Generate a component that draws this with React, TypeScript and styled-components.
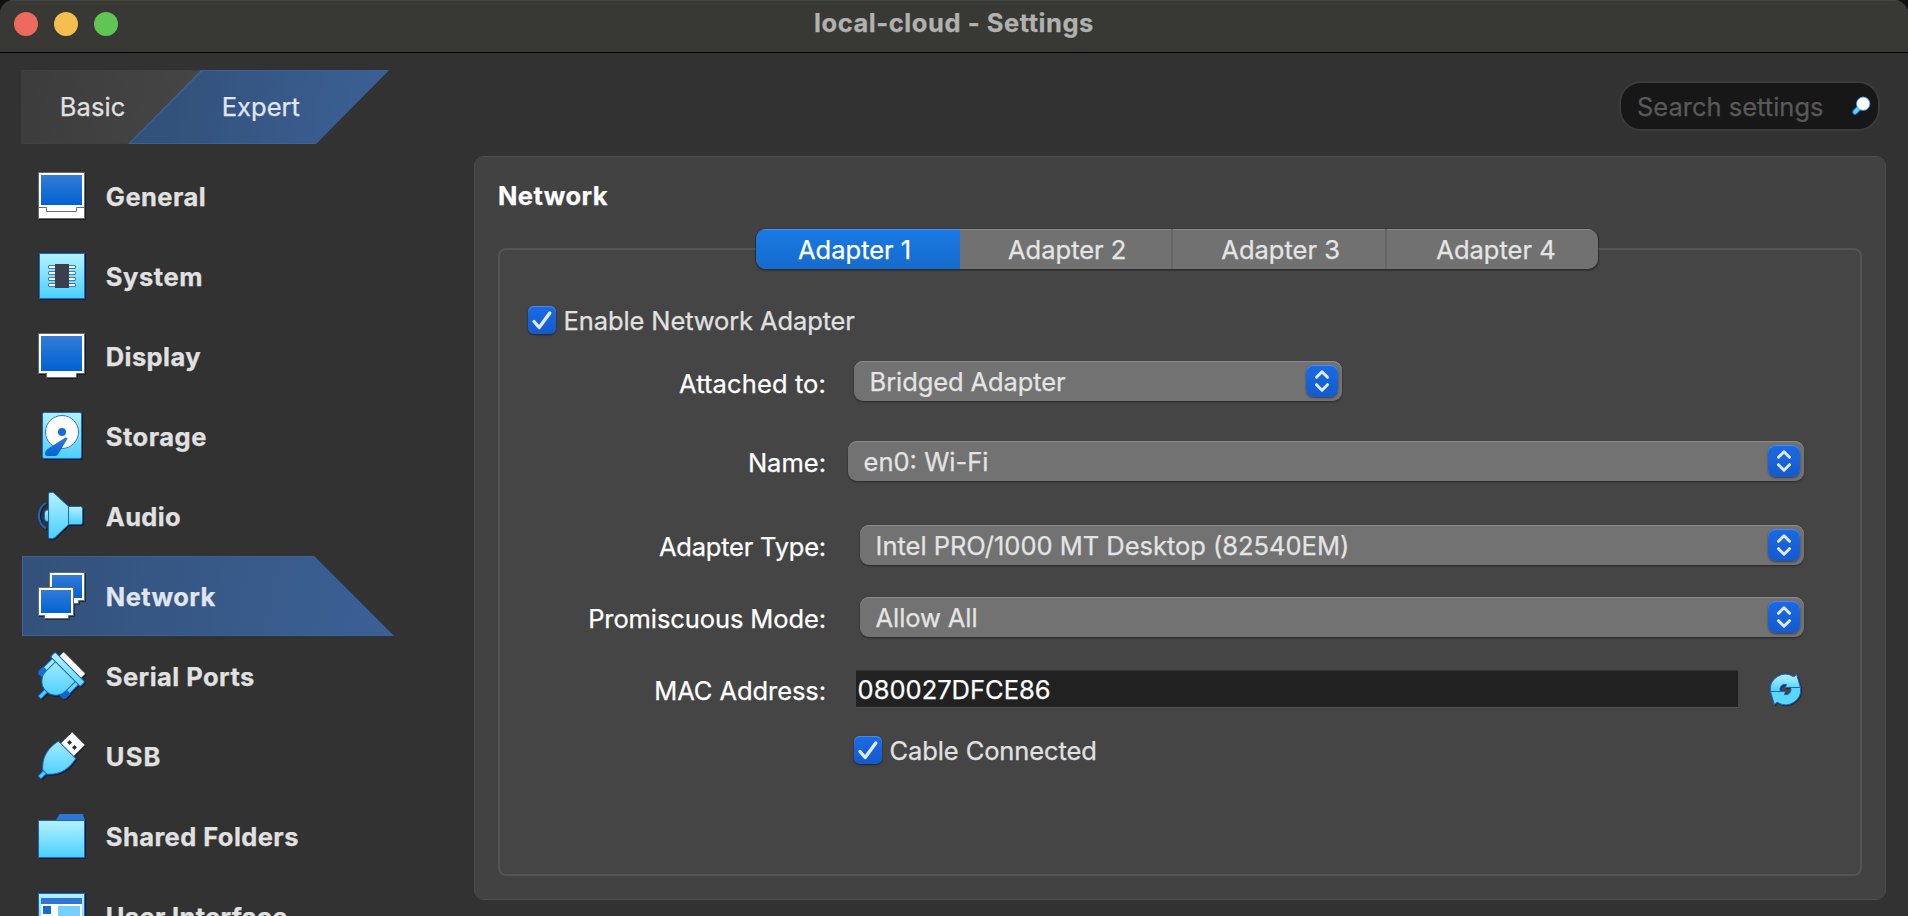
import React, { useState } from "react";
import styled, { createGlobalStyle, css } from "styled-components";

const GlobalStyle = createGlobalStyle`
  * { box-sizing: border-box; }
  html, body { margin: 0; height: 100%; background: #111; overflow: hidden; }
  button, input { font: inherit; letter-spacing: inherit; border: 0; padding: 0; margin: 0; }
`;

const Window = styled.div`
  display: flex;
  flex-direction: column;
  width: 1908px;
  height: 916px;
  overflow: hidden;
  border-radius: 14px 14px 0 0;
  background: #323232;
  color: #e1e1e1;
  font: 400 25.5px/30px Inter, "Liberation Sans", sans-serif;
  -webkit-text-stroke: 0.25px currentColor;
  white-space: nowrap;
  user-select: none;
`;

/* ---------- title bar ---------- */

const TitleBar = styled.header`
  display: grid;
  grid-template-columns: 1fr auto 1fr;
  flex: none;
  height: 53px;
  padding: 0 14px;
  background: #383835;
  border-bottom: 1px solid #000;
  box-shadow: inset 0 1px 0 #454543;
`;

const Lights = styled.div`
  display: flex;
  gap: 16px;
  padding-top: 12px;
`;

const Light = styled.span<{ $color: string }>`
  width: 24px;
  height: 24px;
  border-radius: 50%;
  background: ${(p) => p.$color};
`;

const WindowTitle = styled.h1`
  margin: 8px 0 0;
  font-size: inherit;
  font-weight: 700;
  line-height: 30px;
  letter-spacing: 0.55px;
  color: #b1b1af;
`;

/* ---------- mode switch and search ---------- */

const TopRow = styled.div`
  display: flex;
  flex: none;
  justify-content: space-between;
  align-items: flex-start;
  height: 103px;
  padding: 17px 28px 0 21px;
`;

const ModeSwitch = styled.div`
  display: flex;
  height: 74px;
`;

const BasicMode = styled.button`
  width: 180px;
  padding: 0 0 1px 38.8px;
  text-align: left;
  letter-spacing: 0.1px;
  color: #e0e0e0;
  background: linear-gradient(100deg, #3c3c3c, #464646);
  box-shadow: inset 0 1px 0 #404040, inset 0 -1px 0 #404040;
`;

const ExpertMode = styled.button`
  position: relative;
  width: 261px;
  margin-left: -73px;
  padding: 0 0 1px 93.8px;
  text-align: left;
  color: #e0e6ef;
  background: #3b6296;
  clip-path: polygon(73px 0, 100% 0, 188px 100%, 0 100%);

  &::before {
    content: "";
    position: absolute;
    inset: 1px 0;
    background: linear-gradient(100deg, #33527b 20%, #3b5f93 90%);
    clip-path: polygon(74.5px 0, 100% 0, 188px 100%, 2.5px 100%);
  }
  span { position: relative; }
`;

const SearchBox = styled.label`
  display: flex;
  align-items: center;
  width: 261px;
  height: 50px;
  margin-top: 11px;
  padding: 2px 7px 0 16px;
  border: 2px solid #3c3c3c;
  border-radius: 22px;
  background: #171717;
  svg { margin-bottom: 2px; }
`;

const SearchInput = styled.input`
  width: 215px;
  height: 30px;
  outline: none;
  background: none;
  color: #e0e0e0;
  &::placeholder { color: #595959; opacity: 1; }
`;

/* ---------- category list ---------- */

const Main = styled.div`
  display: flex;
  flex: none;
  height: 760px;
  overflow: hidden;
`;

const Sidebar = styled.nav`
  width: 474px;
  flex: none;
  padding-left: 22px;
`;

const Category = styled.button<{ $active: boolean; $track: number }>`
  position: relative;
  display: flex;
  align-items: flex-start;
  gap: 19.8px;
  width: 372px;
  height: 80px;
  padding: 16px 0 0 16px;
  background: none;
  color: #e1e1e1;
  font-weight: 700;
  letter-spacing: ${(p) => p.$track}px;
  text-align: left;

  span { position: relative; margin-top: 10px; }
  svg { position: relative; flex: none; filter: drop-shadow(1px 1px 0.5px rgba(0, 0, 0, 0.45)); }

  ${(p) =>
    p.$active &&
    css`
      color: #e0e6ef;
      background: #3b6296;
      clip-path: polygon(0 0, 292px 0, 100% 100%, 0 100%);
      &::before {
        content: "";
        position: absolute;
        inset: 1px 0 1px 1px;
        background: linear-gradient(100deg, #33527b 5%, #3b5f93 90%);
      }
    `}
`;

/* ---------- settings page ---------- */

const Page = styled.section`
  width: 1412px;
  height: 744px;
  padding: 24px 23px 0;
  border: 1px solid #4a4a4a;
  border-radius: 10px;
  background: #424242;
`;

const PageTitle = styled.h2`
  margin: 0;
  height: 48px;
  font-size: inherit;
  font-weight: 700;
  line-height: 30px;
  letter-spacing: 0.42px;
  color: #fff;
`;

const Tabs = styled.div`
  position: relative;
  z-index: 1;
  display: flex;
  width: 842px;
  height: 40px;
  margin: 0 0 -21px 258px;
  border-radius: 10px;
  overflow: hidden;
  background: #717171;
  box-shadow: 0 0 0 1px rgba(0, 0, 0, 0.12), 0 1px 1px 1px rgba(0, 0, 0, 0.25);
`;

const Tab = styled.button<{ $active: boolean; $width: number; $line: boolean; $shift: number }>`
  width: ${(p) => p.$width}px;
  padding: 1px 0 0 ${(p) => p.$shift}px;
  text-align: left;
  color: ${(p) => (p.$active ? "#fff" : "#e5e5e5")};
  background: ${(p) => (p.$active ? "linear-gradient(#1a7ae6, #156bcb)" : "transparent")};
  box-shadow: inset 0 1px 0 ${(p) => (p.$active ? "#4c95ea" : "#8a8a8a")};
  ${(p) => p.$line && "border-right: 2px solid #656565;"}
`;

const Group = styled.div`
  display: flex;
  flex-direction: column;
  height: 628px;
  padding-top: 56px;
  border: 2px solid #545454;
  border-radius: 8px;
  background: #454545;
`;

const CheckLabel = styled.label<{ $left: number; $top: number }>`
  display: flex;
  align-items: center;
  gap: 7.6px;
  height: 28px;
  margin: ${(p) => p.$top}px 0 0 ${(p) => p.$left}px;
`;

const CheckButton = styled.button`
  display: flex;
  width: 28px;
  height: 28px;
  border-radius: 6px;
  background: linear-gradient(#1b6be6, #155acb);
  box-shadow: inset 0 1px 0 #4a8bee, 0 1px 2px rgba(0, 0, 0, 0.5);
`;

const CheckText = styled.span<{ $track: number }>`
  padding-top: 1px;
  letter-spacing: ${(p) => p.$track}px;
`;

const FieldRow = styled.div<{ $top: number }>`
  display: flex;
  height: 40px;
  margin-top: ${(p) => p.$top}px;
`;

const FieldLabel = styled.label<{ $drop: number; $track: number }>`
  width: 326px;
  margin-right: 1px;
  padding-top: ${(p) => p.$drop}px;
  line-height: 40px;
  text-align: right;
  letter-spacing: ${(p) => p.$track}px;
  color: #fff;
`;

const Select = styled.button<{ $gap: number; $width: number; $track: number }>`
  display: flex;
  align-items: flex-start;
  justify-content: space-between;
  width: ${(p) => p.$width}px;
  height: 40px;
  margin-left: ${(p) => p.$gap}px;
  padding: 4px 4px 0 15.6px;
  border-radius: 9px;
  background: #727272;
  box-shadow: inset 0 1px 0 #8c8c8c, 0 1px 2px rgba(0, 0, 0, 0.4);
  color: #e4e4e4;
  letter-spacing: ${(p) => p.$track}px;
  span { padding-top: 2px; }
`;

const Stepper = styled.i`
  display: flex;
  width: 32px;
  height: 32px;
  border-radius: 8px;
  background: linear-gradient(#1a6ae5, #155acc);
  box-shadow: inset 0 1px 0 #4a8bee, 0 1px 2px rgba(0, 0, 0, 0.45);
`;

const MacInput = styled.input`
  width: 882px;
  height: 38px;
  margin: -1px 31px 0 29px;
  padding: 1px 0 0 1.6px;
  border-top: 1px solid #333;
  border-bottom: 1px solid #555;
  outline: none;
  background: #212121;
  color: #fff;
`;

const IconButton = styled.button`
  display: flex;
  width: 34px;
  height: 34px;
  margin-top: 2px;
  background: none;
  svg { filter: drop-shadow(1px 1px 0.5px rgba(0, 0, 0, 0.4)); }
`;

/* ---------- icons ---------- */

const EDGE = "#1767cf";

const Gradients = () => (
  <svg width="0" height="0" display="block" aria-hidden>
    <defs>
      <linearGradient id="sky" x1="0" y1="0" x2="0" y2="1">
        <stop offset="0" stopColor="#b4f2ff" />
        <stop offset="1" stopColor="#4acfff" />
      </linearGradient>
      <linearGradient id="plug" gradientUnits="userSpaceOnUse" x1="-15" y1="-15" x2="15" y2="15">
        <stop offset="0" stopColor="#b4f2ff" />
        <stop offset="1" stopColor="#4acfff" />
      </linearGradient>
      <linearGradient id="blue" x1="0" y1="0" x2="0" y2="1">
        <stop offset="0" stopColor="#347bd6" />
        <stop offset="1" stopColor="#0063d3" />
      </linearGradient>
    </defs>
  </svg>
);

const Icon = ({ children }: { children: React.ReactNode }) => (
  <svg width="48" height="48" viewBox="0 0 48 48">
    {children}
  </svg>
);

const GeneralIcon = () => (
  <Icon>
    <rect x="0.5" y="0.5" width="46" height="46" fill="#fff" stroke="#6b6b6b" />
    <rect x="3" y="3" width="41" height="30" fill="url(#blue)" />
    <path d="M0.5 35.5H8.5V39.5H38.5V35.5H46.5" fill="none" stroke="#6b6b6b" />
  </Icon>
);

const SystemIcon = () => (
  <Icon>
    <rect x="1.5" y="1.5" width="45" height="45" fill="url(#sky)" stroke={EDGE} />
    {[12, 18, 24, 30].map((y) => (
      <rect key={y} x="10.5" y={y + 1.5} width="27" height="3" rx="0.5" fill="#fff" stroke="#3d7fae" />
    ))}
    <rect x="17" y="12" width="14" height="24" fill="#3a3f4b" />
  </Icon>
);

const DisplayIcon = () => (
  <Icon>
    <path d="M0.5 1.5H46.5V41.5H38.5V45.5H8.5V41.5H0.5Z" fill="#fff" stroke="#6b6b6b" />
    <rect x="3" y="4" width="41" height="35" fill="url(#blue)" />
  </Icon>
);

const StorageIcon = () => (
  <Icon>
    <rect x="4.5" y="0.5" width="39" height="46" rx="1.8" fill="url(#sky)" stroke={EDGE} />
    <circle cx="24" cy="20" r="16.5" fill="#fff" stroke="#3478cc" />
    <circle cx="24" cy="20" r="4" fill="#176bd4" />
    <path d="M29.6 25.7Q28 25.3 25.5 26.8L11 36Q7 38.5 7 41.5Q7 44 9.5 44H17Q19 44 20.5 41.5L27.5 30Q29.5 27.5 29.6 25.7Z" fill="url(#blue)" />
  </Icon>
);

const AudioIcon = () => (
  <Icon>
    <path d="M8 11A15 15 0 0 0 8 36.5" fill="none" stroke={EDGE} strokeWidth="2" />
    <path d="M10.5 18H9Q6.5 18.5 6.5 21V26.5Q6.5 29 9 29.5H10.5Z" fill="url(#sky)" stroke={EDGE} />
    <path d="M30.5 14.5H42.5Q44.5 14.5 44.5 16.5V30.5Q44.5 32.5 42.5 32.5H30.5Z" fill="url(#sky)" stroke={EDGE} />
    <path d="M10.5 2Q10.5 0.5 12 0.5H14.5Q15.5 0.5 16.5 1.5L30.5 14.5V32.5L17 45.5Q16 46.5 14.5 46.5H12Q10.5 46.5 10.5 45Z" fill="url(#sky)" stroke={EDGE} />
  </Icon>
);

const NetworkIcon = () => (
  <Icon>
    <path d="M11.5 0.5H46.5V28.5H40.5V31.5H17V28.5H11.5Z" fill="#fff" stroke="#6b6b6b" />
    <rect x="14" y="3" width="30" height="23" fill="url(#blue)" />
    <path d="M0.5 15.5H35.5V43.5H30.5V46.5H6.5V43.5H0.5Z" fill="#fff" stroke="#6b6b6b" />
    <rect x="3" y="18" width="30" height="23" fill="url(#blue)" />
  </Icon>
);

const SerialIcon = () => (
  <Icon>
    <g transform="translate(23.5 23.5) rotate(45)" stroke={EDGE}>
      <rect x="-15" y="-18" width="30.5" height="6" rx="1" fill="#fff" stroke="#bbb" strokeWidth="0.5" />
      <rect x="-18.5" y="-6" width="6.5" height="15" fill="url(#plug)" />
      <rect x="12" y="-6" width="6.5" height="15" fill="url(#plug)" />
      <path d="M-19 7H-12V13L-13.5 15H-17.5L-19 13Z" fill="#1b6dd2" />
      <path d="M19 7H12V13L13.5 15H17.5L19 13Z" fill="#0b63d2" />
      <path d="M-2 19V31H2V19Z" fill="#4acfff" />
      <path d="M-14 -6H14V8A14 14 0 0 1 -14 8Z" fill="url(#plug)" />
      <rect x="-21" y="-12" width="42" height="6.5" rx="1.5" fill="url(#plug)" />
    </g>
  </Icon>
);

const UsbIcon = () => (
  <Icon>
    <g transform="translate(23.5 23.5) rotate(45)">
      <rect x="-9" y="-24" width="18" height="17" fill="#fff" />
      <rect x="-5.2" y="-16.6" width="3.5" height="3.5" fill="#323232" />
      <rect x="1.8" y="-16.6" width="3.5" height="3.5" fill="#323232" />
      <path d="M-2 22V31H2V22Z" fill="#4acfff" stroke={EDGE} />
      <path d="M-12.3 -8C-15 4 -13 15 -3 23.5H3C13 15 15 4 12.3 -8Z" fill="url(#plug)" stroke={EDGE} />
    </g>
  </Icon>
);

const FolderIcon = () => (
  <Icon>
    <path d="M17.5 9L21.5 2H45L47 8V9Z" fill="#2f75d3" />
    <rect x="0.5" y="8.5" width="46" height="37" fill="url(#sky)" stroke={EDGE} />
  </Icon>
);

const InterfaceIcon = () => (
  <Icon>
    <rect x="0.5" y="1.5" width="46" height="45" fill="url(#sky)" stroke={EDGE} />
    <rect x="3" y="6" width="41" height="6" fill="#2f75d3" />
    <rect x="3" y="12" width="41" height="32" fill="#fff" />
    <rect x="5" y="14" width="8" height="8" fill="#176bd4" />
    <rect x="20" y="14" width="22" height="16" fill="#76d0ff" />
    <rect x="5" y="25" width="8" height="8" fill="#176bd4" />
  </Icon>
);

const SearchIcon = () => (
  <svg width="20" height="20" viewBox="0 0 20 20">
    <path d="M7.5 12L3.2 16.3" stroke="#1b74d8" strokeWidth="5.8" strokeLinecap="round" />
    <path d="M7.8 11.7L3.3 16.2" stroke="#5ed2ff" strokeWidth="4" strokeLinecap="round" />
    <circle cx="11.8" cy="7.6" r="7" fill="#fff" stroke="#42a5f5" strokeWidth="1" />
  </svg>
);

const RefreshIcon = () => {
  const half = "M1.5 18.5A15 15 0 0 1 24.3 3.6L25.5 3.4L27.5 1.2L31.5 14.5H16.5L17.5 11.5A5 5 0 0 0 11.5 18.5Z";
  return (
    <svg width="34" height="34" viewBox="0 0 34 34">
      <path d={half} transform="rotate(180 16.5 16.5)" fill="#5bd6ff" stroke={EDGE} strokeLinejoin="round" />
      <path d={half} fill="url(#sky)" stroke={EDGE} strokeLinejoin="round" />
    </svg>
  );
};

const CheckMark = () => (
  <svg width="28" height="28" viewBox="0 0 28 28">
    <path d="M6 15.5L11.2 21.5L21.8 7" fill="none" stroke="#dfe9fb" strokeWidth="3.4" strokeLinecap="round" strokeLinejoin="round" />
  </svg>
);

const Chevrons = () => (
  <svg width="32" height="32" viewBox="0 0 32 32">
    <path d="M10.5 12.3L16 6.8L21.5 12.3M10.5 19.7L16 25.2L21.5 19.7" fill="none" stroke="#dfe9fb" strokeWidth="3" strokeLinecap="round" strokeLinejoin="round" />
  </svg>
);

/* ---------- data ---------- */

const categories = [
  { name: "General", icon: GeneralIcon, track: 0.45 },
  { name: "System", icon: SystemIcon, track: 0.55 },
  { name: "Display", icon: DisplayIcon, track: 0.4 },
  { name: "Storage", icon: StorageIcon, track: 0.5 },
  { name: "Audio", icon: AudioIcon, track: 0.3 },
  { name: "Network", icon: NetworkIcon, track: 0.4 },
  { name: "Serial Ports", icon: SerialIcon, track: 0.47 },
  { name: "USB", icon: UsbIcon, track: 1.2 },
  { name: "Shared Folders", icon: FolderIcon, track: 0.42 },
  { name: "User Interface", icon: InterfaceIcon, track: 0.32 },
];

const adapters = [
  { name: "Adapter 1", width: 204, shift: 42 },
  { name: "Adapter 2", width: 213, shift: 48 },
  { name: "Adapter 3", width: 214, shift: 48.3 },
  { name: "Adapter 4", width: 211, shift: 49.3 },
];

const fields = [
  { label: "Attached to:", value: "Bridged Adapter", top: 27, drop: 3, gap: 27, width: 488, labelTrack: 0.12, track: -0.1 },
  { label: "Name:", value: "en0: Wi-Fi", top: 40, drop: 2, gap: 21, width: 956, labelTrack: 0, track: 0 },
  { label: "Adapter Type:", value: "Intel PRO/1000 MT Desktop (82540EM)", top: 44, drop: 2, gap: 33, width: 944, labelTrack: -0.22, track: -0.02 },
  { label: "Promiscuous Mode:", value: "Allow All", top: 32, drop: 2, gap: 33, width: 944, labelTrack: -0.1, track: -0.1 },
];

const CheckBox = () => {
  const [on, setOn] = useState(true);
  return <CheckButton onClick={() => setOn(!on)}>{on && <CheckMark />}</CheckButton>;
};

export default function App() {
  const [category, setCategory] = useState("Network");
  const [adapter, setAdapter] = useState("Adapter 1");

  return (
    <>
      <GlobalStyle />
      <Window>
        <TitleBar>
          <Lights>
            <Light $color="#ed6a5e" />
            <Light $color="#f5bf4f" />
            <Light $color="#61c554" />
          </Lights>
          <WindowTitle>local-cloud - Settings</WindowTitle>
        </TitleBar>

        <TopRow>
          <ModeSwitch>
            <BasicMode>Basic</BasicMode>
            <ExpertMode>
              <span>Expert</span>
            </ExpertMode>
          </ModeSwitch>
          <SearchBox>
            <SearchInput placeholder="Search settings" />
            <SearchIcon />
          </SearchBox>
        </TopRow>

        <Main>
          <Sidebar>
            {categories.map(({ name, icon: CategoryIcon, track }) => (
              <Category key={name} $active={name === category} $track={track} onClick={() => setCategory(name)}>
                <CategoryIcon />
                <span>{name}</span>
              </Category>
            ))}
          </Sidebar>

          <Page>
            <PageTitle>Network</PageTitle>
            <Tabs>
              {adapters.map(({ name, width, shift }, i) => (
                <Tab
                  key={name}
                  $active={name === adapter}
                  $width={width}
                  $shift={shift}
                  $line={i === 1 || i === 2}
                  onClick={() => setAdapter(name)}
                >
                  {name}
                </Tab>
              ))}
            </Tabs>
            <Group>
              <CheckLabel $left={28} $top={0}>
                <CheckBox />
                <CheckText $track={-0.12}>Enable Network Adapter</CheckText>
              </CheckLabel>
              {fields.map((f) => (
                <FieldRow key={f.label} $top={f.top}>
                  <FieldLabel $drop={f.drop} $track={f.labelTrack}>
                    {f.label}
                  </FieldLabel>
                  <Select $gap={f.gap} $width={f.width} $track={f.track}>
                    <span>{f.value}</span>
                    <Stepper>
                      <Chevrons />
                    </Stepper>
                  </Select>
                </FieldRow>
              ))}
              <FieldRow $top={34}>
                <FieldLabel $drop={0} $track={-0.08}>
                  MAC Address:
                </FieldLabel>
                <MacInput defaultValue="080027DFCE86" />
                <IconButton>
                  <RefreshIcon />
                </IconButton>
              </FieldRow>
              <CheckLabel $left={354} $top={25}>
                <CheckBox />
                <CheckText $track={-0.12}>Cable Connected</CheckText>
              </CheckLabel>
            </Group>
          </Page>
        </Main>
        <Gradients />
      </Window>
    </>
  );
}
